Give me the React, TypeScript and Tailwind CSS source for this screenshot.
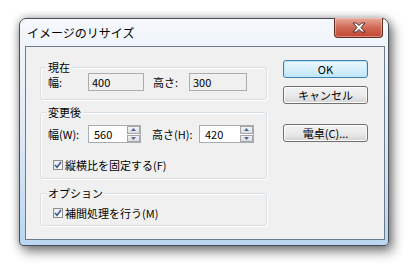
import React from "react";

const font = { fontFamily: '"Noto Sans CJK JP", "Noto Sans", sans-serif' };

function Check() {
  return (
    <div className="w-[10px] h-[10px] border border-[#8e8f8f] bg-gradient-to-br from-[#e6e6e6] to-white flex items-center justify-center">
      <svg width="8" height="8" viewBox="0 0 8 8">
        <path d="M1 4 L3 6.3 L7 1" fill="none" stroke="#3b5b9b" strokeWidth="1.6" />
      </svg>
    </div>
  );
}

function Spin({ value, w }: { value: string; w: string }) {
  return (
    <div className={`${w} h-[18px] border border-[#a9acb3] bg-white flex`}>
      <div className="flex-1 pl-[5px] text-[11px] leading-[16px] text-black">{value}</div>
      <div className="w-[13px] flex flex-col gap-[1px] py-[0px]">
        <div className="flex-1 border border-[#a6a6a6] bg-gradient-to-b from-[#f4f4f4] to-[#dcdcdc] flex items-center justify-center">
          <svg width="5" height="3" viewBox="0 0 5 3"><path d="M0 3 L2.5 0 L5 3Z" fill="#4d64a8" /></svg>
        </div>
        <div className="flex-1 border border-[#a6a6a6] bg-gradient-to-b from-[#f4f4f4] to-[#dcdcdc] flex items-center justify-center">
          <svg width="5" height="3" viewBox="0 0 5 3"><path d="M0 0 L2.5 3 L5 0Z" fill="#4d64a8" /></svg>
        </div>
      </div>
    </div>
  );
}

function ReadBox({ value, w }: { value: string; w: string }) {
  return (
    <div className={`${w} h-[18px] border border-[#acacac] bg-[#f0f0f0] pl-[3px] text-[11px] leading-[16px] text-black`}>
      {value}
    </div>
  );
}

function Group({ label, h, children, mt }: { label: string; h: string; children: React.ReactNode; mt: string }) {
  return (
    <div className={`relative ${mt} ${h} w-[227px] border border-[#d5dfe5] rounded-[3px] shadow-[inset_1px_1px_0_#ffffff,1px_1px_0_#ffffff]`}>
      <div className="absolute -top-[8px] left-[5px] px-[2px] bg-[#f0f0f0] text-[11px] leading-[14px] text-black">{label}</div>
      {children}
    </div>
  );
}

function Btn({ children, def }: { children: React.ReactNode; def?: boolean }) {
  return (
    <div
      className={`w-[85px] h-[18px] rounded-[3px] border flex items-center justify-center text-[11px] leading-none text-black ${
        def
          ? "border-[#3c7fb1] bg-gradient-to-b from-[#eaf6fd] via-[#d9f0fc] to-[#bee6fd] shadow-[inset_0_0_0_1px_#c0e8fb]"
          : "border-[#707070] bg-gradient-to-b from-[#f2f2f2] via-[#ebebeb] to-[#d4d4d4] shadow-[inset_0_0_0_1px_#fcfcfc]"
      }`}
    >
      {children}
    </div>
  );
}

export default function App() {
  return (
    <div className="w-[411px] h-[269px] bg-white pt-[18px] pl-[19px]" style={font}>
      <div className="relative w-[370px] h-[228px] rounded-t-[7px] rounded-b-[4px] border border-[#474f58] bg-gradient-to-b from-[#f5f8fc] via-[#dfeaf6] to-[#b9d6f2] shadow-[0_0_8px_rgba(0,0,0,0.35),4px_6px_12px_rgba(0,0,0,0.45)] flex flex-col">
        <div className="h-[27px] pl-[7px] pt-[6px] text-[12px] leading-[16px] text-black">イメージのリサイズ</div>
        <div className="absolute top-[-1px] right-[5px] w-[49px] h-[20px] rounded-b-[4px] border border-[#5e2a22] border-t-0 bg-gradient-to-b from-[#e9aa9c] via-[#d06a57] to-[#c24430] shadow-[inset_0_0_0_1px_rgba(255,210,200,0.5)] flex items-center justify-center">
          <svg width="14" height="11" viewBox="0 0 14 11">
            <path d="M1 1 H4.5 L7 3.6 L9.5 1 H13 L9 5.5 L13 10 H9.5 L7 7.4 L4.5 10 H1 L5 5.5 Z" fill="#ffffff" stroke="#4b2b28" strokeWidth="1" strokeLinejoin="round" />
          </svg>
        </div>
        <div className="ml-[5px] w-[360px] h-[194px] border border-[#6d7a89] bg-[#f0f0f0] flex pl-[14px] pt-[20px]">
          <div className="flex flex-col">
            <Group label="現在" h="h-[33px]" mt="mt-0">
              <div className="flex items-center pl-[7px] pt-[5px] text-[11px] text-black">
                <div className="w-[40px]">幅:</div>
                <ReadBox value="400" w="w-[56px]" />
                <div className="w-[45px] pl-[9px]">高さ:</div>
                <ReadBox value="300" w="w-[58px]" />
              </div>
            </Group>
            <Group label="変更後" h="h-[67px]" mt="mt-[12px]">
              <div className="flex items-center pl-[7px] pt-[12px] text-[11px] text-black">
                <div className="w-[40px]">幅(W):</div>
                <Spin value="560" w="w-[53px]" />
                <div className="w-[58px] pl-[11px]">高さ(H):</div>
                <Spin value="420" w="w-[55px]" />
              </div>
              <div className="flex items-center gap-[2px] pl-[12px] pt-[15px] text-[11px] leading-[14px] text-black">
                <Check />
                <span>縦横比を固定する(F)</span>
              </div>
            </Group>
            <Group label="オプション" h="h-[33px]" mt="mt-[14px]">
              <div className="flex items-center gap-[2px] pl-[12px] pt-[12px] text-[11px] leading-[14px] text-black">
                <Check />
                <span>補間処理を行う(M)</span>
              </div>
            </Group>
          </div>
          <div className="ml-[16px] -mt-[7px] flex flex-col">
            <Btn def>OK</Btn>
            <div className="mt-[8px]"><Btn>キャンセル</Btn></div>
            <div className="mt-[20px]"><Btn>電卓(C)...</Btn></div>
          </div>
        </div>
      </div>
    </div>
  );
}
